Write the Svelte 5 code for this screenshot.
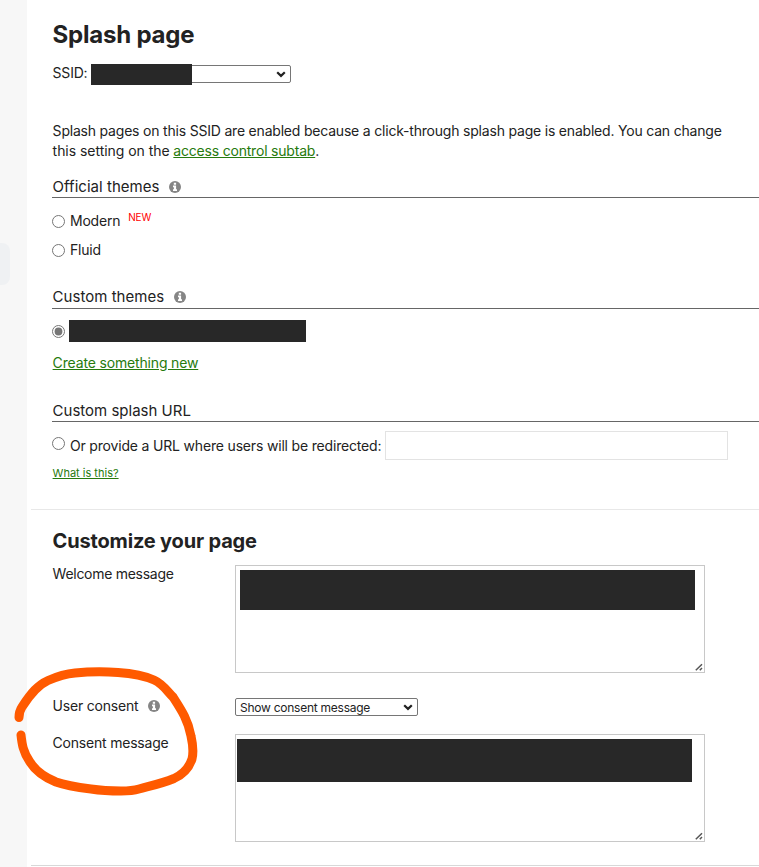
<script>
  let theme = $state('custom');
  let redirectUrl = $state('');
  let welcomeMessage = $state('');
  let consentMode = $state('show');
  let consentMessage = $state('');
</script>

{#snippet info()}
  <svg class="info" viewBox="0 0 12 12" width="12" height="12" aria-hidden="true">
    <circle cx="6" cy="6" r="6" />
    <path d="M4.800 1.700h2.300v2H4.800zM4 4.600h3.100v3.700H8v1.700H4V8.300h.9V6.200H4z" />
  </svg>
{/snippet}

{#snippet chevron()}
  <svg class="chevron" viewBox="0 0 10 7" width="10" height="7" aria-hidden="true">
    <path d="M1.200 1.200L5 4.900L8.800 1.200" />
  </svg>
{/snippet}

{#snippet grip()}
  <svg class="grip" viewBox="0 0 8 8" width="8" height="8" aria-hidden="true">
    <path d="M.8 7.200L7 1.200M4.800 7.200L7 5" />
  </svg>
{/snippet}

<div class="page">
  <div class="sidebar"><div class="tab"></div></div>

  <main>
    <section class="splash">
      <h1>Splash page</h1>
      <div class="ssid">
        <label for="ssid">SSID:</label>
        <div class="covered">
          <select id="ssid" class="ssid-select"><option></option></select>
          {@render chevron()}
          <span class="redacted ssid-name"></span>
        </div>
      </div>

      <p class="intro">
        Splash pages on this SSID are enabled because a click-through splash page is enabled. You can change <span class="setting">this setting on the</span> <a href="#access">access control subtab</a>.
      </p>

      <h3 class="official">Official themes {@render info()}</h3>
      <label class="option modern">
        <input type="radio" value="modern" bind:group={theme} />
        Modern <span class="new">NEW</span>
      </label>
      <label class="option">
        <input type="radio" value="fluid" bind:group={theme} />
        Fluid
      </label>

      <h3 class="custom">Custom themes {@render info()}</h3>
      <label class="option current">
        <input type="radio" value="custom" bind:group={theme} />
        <span class="redacted theme-name"></span>
      </label>
      <a class="create" href="#new">Create something new</a>

      <h3 class="url">Custom splash URL</h3>
      <div class="option url-option">
        <input id="url-radio" type="radio" value="url" bind:group={theme} />
        <label for="url-radio">Or provide a URL where users will be redirected:</label>
        <input type="text" aria-label="Redirect URL" bind:value={redirectUrl} />
      </div>
      <a class="help" href="#help">What is this?</a>
    </section>

    <section class="customize">
      <h2>Customize your page</h2>
      <div class="field welcome">
        <label for="welcome">Welcome message</label>
        <div class="covered">
          <textarea id="welcome" bind:value={welcomeMessage}></textarea>
          {@render grip()}
          <span class="redacted welcome-text"></span>
        </div>
      </div>
      <div class="field consent">
        <label for="consent">User consent {@render info()}</label>
        <div class="covered">
          <select id="consent" class="consent-select" bind:value={consentMode}>
            <option value="show">Show consent message</option>
            <option value="hide">No consent message</option>
          </select>
          {@render chevron()}
        </div>
      </div>
      <div class="field message">
        <label for="message">Consent message</label>
        <div class="covered">
          <textarea id="message" bind:value={consentMessage}></textarea>
          {@render grip()}
          <span class="redacted consent-text"></span>
        </div>
      </div>
    </section>
  </main>

  <svg class="marker" viewBox="0 0 240 217" width="240" height="217" aria-hidden="true">
    <path d="M19 67.500C19 62 20 60 22 57C31 43 38 35 48 30.500C56 27 64 24 75 23C91 21.500 103 21.500 118 22.500C133 23.500 145 26 154 30C163 34 167 41 173 47C182 61 188 70 191 86C193 95 193.500 103 192 109C189 118 184 124 174 128.500C162 133.500 150 136 139 139C134 140.500 128 141 121 141C111 141 101 140.500 91 139C79 137.500 67 136 56 132C44 127 35 120 30 112C23 102 22 94 21 85" />
  </svg>
</div>

<style>
  :global(body) {
    margin: 0;
    background: #fff;
  }

  .page {
    position: relative;
    display: flex;
    width: 759px;
    height: 867px;
    overflow: hidden;
    color: #222;
    font-family: Inter, sans-serif;
    font-size: 14px;
    line-height: 20px;
    letter-spacing: -0.21px;
  }

  .sidebar {
    flex: 0 0 27px;
    padding-top: 243px;
    box-sizing: border-box;
    background: #f7f7f7;
  }

  .tab {
    width: 10px;
    height: 42px;
    border-radius: 0 8px 8px 0;
    background: #eff1f3;
  }

  main {
    flex: 1;
    min-width: 0;
    margin-left: 4px;
  }

  section {
    box-sizing: border-box;
    padding-left: 21px;
  }

  .splash {
    height: 510px;
    padding-top: 20px;
    border-bottom: 1px solid #e8e8e8;
  }

  .customize {
    height: 356px;
    padding-top: 19px;
    border-bottom: 1px solid #d8d8d8;
  }

  h1,
  h2,
  h3,
  p {
    margin: 0;
  }

  h1,
  h2,
  h3,
  .ssid label,
  .create,
  .help,
  .field > label {
    text-indent: 0.6px;
  }

  h1 {
    font-size: 24px;
    line-height: 30px;
    font-weight: 700;
  }

  h2 {
    height: 24px;
    font-size: 20px;
    line-height: 24px;
    font-weight: 700;
    letter-spacing: -0.17px;
  }

  h3 {
    display: flex;
    align-items: center;
    height: 22px;
    border-bottom: 1px solid #666;
    font-size: 15px;
    font-weight: 400;
    letter-spacing: 0.03px;
  }

  a {
    color: #267a0d;
    text-decoration: underline;
  }

  input {
    margin: 0;
    box-sizing: border-box;
  }

  input[type='radio'] {
    width: 13px;
    height: 13px;
    margin-right: 5px;
    accent-color: #767676;
  }

  select {
    height: 18px;
    padding: 0 4px;
    border: 1px solid #767676;
    border-radius: 2px;
    box-sizing: border-box;
    appearance: none;
    background-color: #fff;
    color: #222;
    font: 12px Inter, sans-serif;
    letter-spacing: -0.25px;
  }

  .info {
    flex: none;
    margin-left: 10px;
    fill: #858585;
  }

  .info path {
    fill: #fff;
  }

  .redacted {
    background: #282828;
  }

  .covered {
    position: relative;
    display: flex;
  }

  .covered .redacted {
    position: absolute;
  }

  .chevron {
    position: absolute;
    right: 5px;
    bottom: 5px;
    fill: none;
    stroke: #222;
    stroke-width: 2.2;
    pointer-events: none;
  }

  .grip {
    position: absolute;
    right: 2px;
    bottom: 2px;
    fill: none;
    stroke: #555;
    stroke-width: 1.5;
    pointer-events: none;
  }

  .ssid {
    display: flex;
    align-items: center;
    height: 20px;
    margin-top: 13px;
  }

  .ssid label {
    width: 39px;
  }

  .ssid-select {
    width: 200px;
    margin-top: 2px;
  }

  .ssid-name {
    top: 1px;
    left: 0;
    width: 101px;
    height: 21px;
  }

  .intro {
    width: 690px;
    margin-top: 38px;
    padding-left: 0.6px;
    letter-spacing: -0.2px;
  }

  .setting {
    letter-spacing: -0.04px;
  }

  .official {
    margin-top: 14px;
  }

  .official,
  .url {
    padding-top: 1px;
    height: 21px;
  }

  .option {
    display: flex;
    align-items: center;
    height: 20px;
  }

  .modern {
    margin: 13px 0 9px;
  }

  .new {
    margin: -8px 0 0 8px;
    color: #f00;
    font-size: 10px;
  }

  .custom {
    margin-top: 26px;
  }

  .current {
    height: 22px;
    margin-top: 11px;
  }

  .theme-name {
    width: 237px;
    height: 22px;
    margin-left: -1px;
  }

  .create {
    display: block;
    width: max-content;
    margin-top: 11px;
    letter-spacing: -0.16px;
  }

  .url {
    margin-top: 26px;
    letter-spacing: 0;
  }

  .url-option {
    height: 29px;
    margin-top: 9px;
  }

  .url-option input[type='radio'] {
    margin-bottom: 5px;
  }

  .url-option label {
    width: 315px;
    white-space: nowrap;
    letter-spacing: -0.18px;
  }

  .url-option input[type='text'] {
    width: 343px;
    height: 29px;
    border: 1px solid #e3e3e3;
  }

  .help {
    display: block;
    width: max-content;
    margin-top: 3px;
    font-size: 11px;
    letter-spacing: 0;
  }

  .field {
    display: flex;
    align-items: flex-start;
  }

  .field > label {
    display: flex;
    align-items: center;
    flex: 0 0 183px;
  }

  .welcome {
    margin-top: 12px;
  }

  .welcome > label {
    letter-spacing: -0.28px;
  }

  .welcome > label,
  .message > label {
    margin-top: -1px;
  }

  .consent {
    margin: 23px 0 18px;
  }

  .consent-select {
    width: 183px;
    margin-top: 2px;
  }

  textarea {
    width: 470px;
    height: 108px;
    border: 1px solid #c8c8c8;
    box-sizing: border-box;
    resize: none;
    font: 13px Inter, sans-serif;
  }

  .welcome-text {
    top: 5px;
    left: 5px;
    width: 455px;
    height: 40px;
  }

  .consent-text {
    top: 5px;
    left: 2px;
    width: 455px;
    height: 43px;
  }

  /* hand-drawn circle around the consent labels */
  .marker {
    position: absolute;
    top: 650px;
    left: 0;
    fill: none;
    stroke: #ff5a00;
    stroke-width: 9;
    stroke-linecap: round;
    stroke-linejoin: round;
    pointer-events: none;
  }
</style>
